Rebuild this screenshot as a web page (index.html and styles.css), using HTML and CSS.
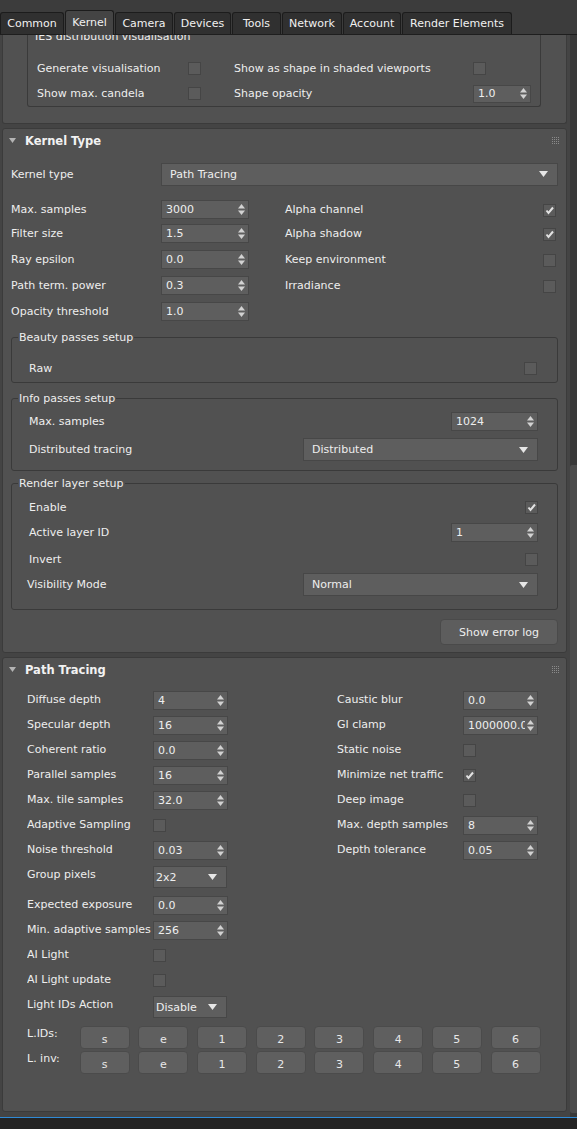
FILE: index.html
```html
<!DOCTYPE html>
<html>
<head>
<meta charset="utf-8">
<title>Render Setup - Kernel</title>
<link rel="stylesheet" href="styles.css">
</head>
<body>
<div class="app">
  <div class="tabbar">
    <div class="tab t-common">Common</div>
    <div class="tab t-kernel active">Kernel</div>
    <div class="tab t-camera">Camera</div>
    <div class="tab t-devices">Devices</div>
    <div class="tab t-tools">Tools</div>
    <div class="tab t-network">Network</div>
    <div class="tab t-account">Account</div>
    <div class="tab t-render">Render Elements</div>
  </div>

  <div class="viewport">
    <div class="rollouts">

      <section class="rollout partial">
        <div class="group ies">
          <span class="legend">IES distribution visualisation</span>
          <div class="ies-grid">
            <span class="lbl">Generate visualisation</span>
            <span class="cb"></span>
            <span class="lbl">Show as shape in shaded viewports</span>
            <span class="cb"></span>
            <span class="lbl">Show max. candela</span>
            <span class="cb"></span>
            <span class="lbl">Shape opacity</span>
            <div class="spin s-ies"><span class="val">1.0</span><svg class="arr" viewBox="0 0 7 11"><polygon points="0,4.5 3.5,0 7,4.5"/><polygon points="0,6.5 3.5,11 7,6.5"/></svg></div>
          </div>
        </div>
      </section>

      <section class="rollout">
        <div class="rhead">
          <svg class="tri" viewBox="0 0 7 5"><polygon points="0,0 7,0 3.5,5"/></svg>
          <span class="title">Kernel Type</span>
          <svg class="grip" viewBox="0 0 8 8"><g><rect x="0" y="0" width="1" height="1"/><rect x="2" y="0" width="1" height="1"/><rect x="4" y="0" width="1" height="1"/><rect x="6" y="0" width="1" height="1"/><rect x="0" y="2" width="1" height="1"/><rect x="2" y="2" width="1" height="1"/><rect x="4" y="2" width="1" height="1"/><rect x="6" y="2" width="1" height="1"/><rect x="0" y="4" width="1" height="1"/><rect x="2" y="4" width="1" height="1"/><rect x="4" y="4" width="1" height="1"/><rect x="6" y="4" width="1" height="1"/><rect x="0" y="6" width="1" height="1"/><rect x="2" y="6" width="1" height="1"/><rect x="4" y="6" width="1" height="1"/><rect x="6" y="6" width="1" height="1"/></g></svg>
        </div>
        <div class="kbody">
          <div class="krow">
            <span class="lbl">Kernel type</span>
            <div class="dd dd-wide"><span class="val">Path Tracing</span><svg class="darr" viewBox="0 0 9 6"><polygon points="0,0 9,0 4.5,6"/></svg></div>
          </div>

          <div class="kgrid">
            <span class="lbl">Max. samples</span>
            <div class="spin"><span class="val">3000</span><svg class="arr" viewBox="0 0 7 11"><polygon points="0,4.5 3.5,0 7,4.5"/><polygon points="0,6.5 3.5,11 7,6.5"/></svg></div>
            <span></span>
            <span class="lbl">Alpha channel</span>
            <span class="cb on"><svg viewBox="0 0 11 11"><path d="M2.5 5.5 L4.5 8 L9 2.5"/></svg></span>

            <span class="lbl">Filter size</span>
            <div class="spin"><span class="val">1.5</span><svg class="arr" viewBox="0 0 7 11"><polygon points="0,4.5 3.5,0 7,4.5"/><polygon points="0,6.5 3.5,11 7,6.5"/></svg></div>
            <span></span>
            <span class="lbl">Alpha shadow</span>
            <span class="cb on"><svg viewBox="0 0 11 11"><path d="M2.5 5.5 L4.5 8 L9 2.5"/></svg></span>

            <span class="lbl">Ray epsilon</span>
            <div class="spin"><span class="val">0.0</span><svg class="arr" viewBox="0 0 7 11"><polygon points="0,4.5 3.5,0 7,4.5"/><polygon points="0,6.5 3.5,11 7,6.5"/></svg></div>
            <span></span>
            <span class="lbl">Keep environment</span>
            <span class="cb"></span>

            <span class="lbl">Path term. power</span>
            <div class="spin"><span class="val">0.3</span><svg class="arr" viewBox="0 0 7 11"><polygon points="0,4.5 3.5,0 7,4.5"/><polygon points="0,6.5 3.5,11 7,6.5"/></svg></div>
            <span></span>
            <span class="lbl">Irradiance</span>
            <span class="cb"></span>

            <span class="lbl">Opacity threshold</span>
            <div class="spin"><span class="val">1.0</span><svg class="arr" viewBox="0 0 7 11"><polygon points="0,4.5 3.5,0 7,4.5"/><polygon points="0,6.5 3.5,11 7,6.5"/></svg></div>
          </div>

          <div class="group g-beauty">
            <span class="legend">Beauty passes setup</span>
            <div class="grow r-cb first">
              <span class="lbl">Raw</span>
              <span class="cb"></span>
            </div>
          </div>

          <div class="group g-info">
            <span class="legend">Info passes setup</span>
            <div class="grow r-spin first">
              <span class="lbl">Max. samples</span>
              <div class="spin s-group"><span class="val">1024</span><svg class="arr" viewBox="0 0 7 11"><polygon points="0,4.5 3.5,0 7,4.5"/><polygon points="0,6.5 3.5,11 7,6.5"/></svg></div>
            </div>
            <div class="grow r-dd">
              <span class="lbl">Distributed tracing</span>
              <div class="dd dd-group"><span class="val">Distributed</span><svg class="darr" viewBox="0 0 9 6"><polygon points="0,0 9,0 4.5,6"/></svg></div>
            </div>
          </div>

          <div class="group g-render">
            <span class="legend">Render layer setup</span>
            <div class="grow r-cb first">
              <span class="lbl">Enable</span>
              <span class="cb on"><svg viewBox="0 0 11 11"><path d="M2.5 5.5 L4.5 8 L9 2.5"/></svg></span>
            </div>
            <div class="grow r-spin">
              <span class="lbl">Active layer ID</span>
              <div class="spin s-group"><span class="val">1</span><svg class="arr" viewBox="0 0 7 11"><polygon points="0,4.5 3.5,0 7,4.5"/><polygon points="0,6.5 3.5,11 7,6.5"/></svg></div>
            </div>
            <div class="grow r-cb r-invert">
              <span class="lbl">Invert</span>
              <span class="cb"></span>
            </div>
            <div class="grow r-dd">
              <span class="lbl shift">Visibility Mode</span>
              <div class="dd dd-group"><span class="val">Normal</span><svg class="darr" viewBox="0 0 9 6"><polygon points="0,0 9,0 4.5,6"/></svg></div>
            </div>
          </div>

          <div class="btnrow">
            <button class="btn">Show error log</button>
          </div>
        </div>
      </section>

      <section class="rollout">
        <div class="rhead">
          <svg class="tri" viewBox="0 0 7 5"><polygon points="0,0 7,0 3.5,5"/></svg>
          <span class="title">Path Tracing</span>
          <svg class="grip" viewBox="0 0 8 8"><g><rect x="0" y="0" width="1" height="1"/><rect x="2" y="0" width="1" height="1"/><rect x="4" y="0" width="1" height="1"/><rect x="6" y="0" width="1" height="1"/><rect x="0" y="2" width="1" height="1"/><rect x="2" y="2" width="1" height="1"/><rect x="4" y="2" width="1" height="1"/><rect x="6" y="2" width="1" height="1"/><rect x="0" y="4" width="1" height="1"/><rect x="2" y="4" width="1" height="1"/><rect x="4" y="4" width="1" height="1"/><rect x="6" y="4" width="1" height="1"/><rect x="0" y="6" width="1" height="1"/><rect x="2" y="6" width="1" height="1"/><rect x="4" y="6" width="1" height="1"/><rect x="6" y="6" width="1" height="1"/></g></svg>
        </div>
        <div class="pbody">
          <div class="pcols">
            <div class="pcol pleft">
              <span class="plbl">Diffuse depth</span>
              <div class="spin s-pt"><span class="val">4</span><svg class="arr" viewBox="0 0 7 11"><polygon points="0,4.5 3.5,0 7,4.5"/><polygon points="0,6.5 3.5,11 7,6.5"/></svg></div>
              <span class="plbl">Specular depth</span>
              <div class="spin s-pt"><span class="val">16</span><svg class="arr" viewBox="0 0 7 11"><polygon points="0,4.5 3.5,0 7,4.5"/><polygon points="0,6.5 3.5,11 7,6.5"/></svg></div>
              <span class="plbl">Coherent ratio</span>
              <div class="spin s-pt"><span class="val">0.0</span><svg class="arr" viewBox="0 0 7 11"><polygon points="0,4.5 3.5,0 7,4.5"/><polygon points="0,6.5 3.5,11 7,6.5"/></svg></div>
              <span class="plbl">Parallel samples</span>
              <div class="spin s-pt"><span class="val">16</span><svg class="arr" viewBox="0 0 7 11"><polygon points="0,4.5 3.5,0 7,4.5"/><polygon points="0,6.5 3.5,11 7,6.5"/></svg></div>
              <span class="plbl">Max. tile samples</span>
              <div class="spin s-pt"><span class="val">32.0</span><svg class="arr" viewBox="0 0 7 11"><polygon points="0,4.5 3.5,0 7,4.5"/><polygon points="0,6.5 3.5,11 7,6.5"/></svg></div>
              <span class="plbl">Adaptive Sampling</span>
              <span class="cb pcb"></span>
              <span class="plbl">Noise threshold</span>
              <div class="spin s-pt"><span class="val">0.03</span><svg class="arr" viewBox="0 0 7 11"><polygon points="0,4.5 3.5,0 7,4.5"/><polygon points="0,6.5 3.5,11 7,6.5"/></svg></div>
              <span class="plbl">Group pixels</span>
              <div class="dd dd-small"><span class="val">2x2</span><svg class="darr" viewBox="0 0 9 6"><polygon points="0,0 9,0 4.5,6"/></svg></div>
              <span class="plbl">Expected exposure</span>
              <div class="spin s-pt"><span class="val">0.0</span><svg class="arr" viewBox="0 0 7 11"><polygon points="0,4.5 3.5,0 7,4.5"/><polygon points="0,6.5 3.5,11 7,6.5"/></svg></div>
              <span class="plbl">Min. adaptive samples</span>
              <div class="spin s-pt"><span class="val">256</span><svg class="arr" viewBox="0 0 7 11"><polygon points="0,4.5 3.5,0 7,4.5"/><polygon points="0,6.5 3.5,11 7,6.5"/></svg></div>
              <span class="plbl">AI Light</span>
              <span class="cb pcb"></span>
              <span class="plbl">AI Light update</span>
              <span class="cb pcb"></span>
              <span class="plbl">Light IDs Action</span>
              <div class="dd dd-small"><span class="val">Disable</span><svg class="darr" viewBox="0 0 9 6"><polygon points="0,0 9,0 4.5,6"/></svg></div>
            </div>

            <div class="pcol pright">
              <span class="plbl">Caustic blur</span>
              <div class="spin s-pt"><span class="val">0.0</span><svg class="arr" viewBox="0 0 7 11"><polygon points="0,4.5 3.5,0 7,4.5"/><polygon points="0,6.5 3.5,11 7,6.5"/></svg></div>
              <span class="plbl">GI clamp</span>
              <div class="spin s-pt"><span class="val">1000000.0</span><svg class="arr" viewBox="0 0 7 11"><polygon points="0,4.5 3.5,0 7,4.5"/><polygon points="0,6.5 3.5,11 7,6.5"/></svg></div>
              <span class="plbl">Static noise</span>
              <span class="cb pcb"></span>
              <span class="plbl">Minimize net traffic</span>
              <span class="cb pcb on"><svg viewBox="0 0 11 11"><path d="M2.5 5.5 L4.5 8 L9 2.5"/></svg></span>
              <span class="plbl">Deep image</span>
              <span class="cb pcb"></span>
              <span class="plbl">Max. depth samples</span>
              <div class="spin s-pt"><span class="val">8</span><svg class="arr" viewBox="0 0 7 11"><polygon points="0,4.5 3.5,0 7,4.5"/><polygon points="0,6.5 3.5,11 7,6.5"/></svg></div>
              <span class="plbl">Depth tolerance</span>
              <div class="spin s-pt"><span class="val">0.05</span><svg class="arr" viewBox="0 0 7 11"><polygon points="0,4.5 3.5,0 7,4.5"/><polygon points="0,6.5 3.5,11 7,6.5"/></svg></div>
            </div>
          </div>

          <div class="lids">
            <span class="lidlbl">L.IDs:</span>
            <button class="lbtn">s</button><button class="lbtn">e</button><button class="lbtn">1</button><button class="lbtn">2</button><button class="lbtn">3</button><button class="lbtn">4</button><button class="lbtn">5</button><button class="lbtn">6</button>
            <span class="lidlbl">L. inv:</span>
            <button class="lbtn">s</button><button class="lbtn">e</button><button class="lbtn">1</button><button class="lbtn">2</button><button class="lbtn">3</button><button class="lbtn">4</button><button class="lbtn">5</button><button class="lbtn">6</button>
          </div>
        </div>
      </section>
    </div>

    <div class="scrollbar"><div class="thumb"></div></div>
  </div>

  <div class="statusline"></div>
</div>
</body>
</html>
```

FILE: styles.css
```css
* { box-sizing: border-box; }
html, body { margin: 0; padding: 0; }
body {
  width: 577px;
  height: 1129px;
  overflow: hidden;
  background: #444444;
  font-family: "DejaVu Sans", "Liberation Sans", sans-serif;
  font-size: 11px;
  color: #eeeeee;
}
.app { display: flex; flex-direction: column; height: 1129px; }

/* Tabs */
.tabbar {
  height: 35px;
  flex: none;
  display: flex;
  align-items: flex-end;
  background: #3c3c3c;
  border-bottom: 1px solid #1e1e1e;
  position: relative;
  z-index: 2;
}
.tab {
  height: 22px;
  margin-right: 1px;
  border: 1px solid #1c1c1c;
  border-bottom: none;
  border-radius: 3px 3px 0 0;
  background: #303030;
  color: #f0f0f0;
  text-align: center;
  line-height: 21px;
  white-space: nowrap;
}
.tab.active {
  height: 25px;
  margin-bottom: -1px;
  background: #444444;
  line-height: 24px;
}
.t-common { width: 64px; }
.t-kernel { width: 49px; }
.t-camera { width: 58px; }
.t-devices { width: 57px; }
.t-tools { width: 49px; }
.t-network { width: 60px; }
.t-account { width: 58px; }
.t-render { width: 110px; }

/* Viewport */
.viewport {
  height: 1082px;
  flex: none;
  display: flex;
  overflow: hidden;
}
.rollouts {
  width: 570px;
  padding: 0 3px 0 2px;
  display: flex;
  flex-direction: column;
  gap: 4px;
}
.scrollbar {
  width: 7px;
  background: #393939;
  display: flex;
  flex-direction: column;
  justify-content: flex-end;
  padding-bottom: 4px;
}
.thumb {
  height: 648px;
  background: #4c4c4c;
  border-radius: 2px 0 0 2px;
}
.statusline {
  flex: 1;
  border-top: 1px solid #2f8ad6;
  background: #242424;
}

/* Rollout */
.rollout {
  flex: none;
  background: #515151;
  border: 1px solid #3b3b3b;
  border-radius: 3px;
}
.rollout.partial {
  height: 89px;
  border-top: none;
  border-radius: 0 0 3px 3px;
  overflow: hidden;
  padding: 0 25px 0 24px;
}
.rhead {
  height: 23px;
  display: flex;
  align-items: center;
  padding: 0 6px 0 6px;
}
.tri { width: 7px; height: 5px; fill: #b4b4b4; margin-right: 9px; }
.title { flex: 1; font-weight: bold; color: #f2f2f2; font-size: 11.5px; }
.grip { width: 8px; height: 8px; fill: #8a8a8a; }

.lbl { white-space: nowrap; }
.lbl.shift { margin-left: -2px; }

/* Group boxes */
.group {
  border: 1px solid #3a3a3a;
  border-radius: 3px;
}
.legend {
  display: block;
  width: fit-content;
  height: 13px;
  margin: -7px 0 0 6px;
  padding: 0 1px;
  line-height: 13px;
  background: #515151;
  white-space: nowrap;
}
.grow {
  display: flex;
  align-items: center;
  justify-content: space-between;
  padding: 0 19px 0 17px;
}
.r-cb { height: 13px; }
.r-spin { height: 19px; }
.r-dd { height: 23px; }

/* IES partial group (scrolled: top edge hidden) */
.group.ies {
  height: 76px;
  border-top: none;
  border-radius: 0 0 3px 3px;
}
.group.ies .legend { margin-top: -4px; height: 12px; line-height: 12px; overflow: hidden; }
.ies-grid {
  display: grid;
  grid-template-columns: 151px 13px 33px 1fr 58px;
  grid-template-rows: 25px 25px;
  align-items: center;
  padding: 0 9px 0 9px;
  margin-top: 13px;
}
.ies-grid .lbl:nth-of-type(3), .ies-grid .lbl:nth-of-type(7) { grid-column: 4; }

/* Kernel body */
.kbody { padding: 10px 8px 7px 8px; }
.krow {
  display: grid;
  grid-template-columns: 150px 1fr;
  align-items: center;
  height: 24px;
}
.kgrid {
  display: grid;
  grid-template-columns: 150px 88px 36px 1fr 13px;
  grid-template-rows: 24px 26px 26px 26px 19px;
  align-items: start;
  margin: 14px 2px 0 0;
}
.kgrid .lbl { line-height: 19px; }
.kgrid .cb { margin-top: 4px; }

.g-beauty { margin-top: 16px; padding-bottom: 7px; }
.g-beauty .first { margin-top: 18px; }
.g-info { margin-top: 15px; padding-bottom: 9px; }
.g-info .first { margin-top: 7px; }
.g-info .r-dd { margin-top: 7px; }
.g-render { margin-top: 12px; padding-bottom: 13px; }
.g-render .first { margin-top: 11px; }
.g-render .r-spin { margin-top: 9px; }
.g-render .r-invert { margin-top: 11px; }
.g-render .r-dd { margin-top: 7px; }
.g-beauty .grow { padding-right: 20px; }

.btnrow { display: flex; justify-content: flex-end; margin-top: 9px; }
.btn {
  width: 118px;
  height: 26px;
  background: #5d5d5d;
  border: 1px solid #4a4a4a;
  border-radius: 4px;
  color: #eeeeee;
  font: inherit;
  padding: 0;
}

/* Controls */
.spin {
  display: flex;
  align-items: center;
  width: 88px;
  height: 19px;
  background: #5e5e5e;
  border: 1px solid #474747;
  padding: 0 3px 0 4px;
}
.spin .val {
  flex: 1;
  overflow: hidden;
  white-space: nowrap;
  line-height: 17px;
}
.arr { width: 7px; height: 11px; fill: #d2d2d2; flex: none; margin-left: 2px; }
.s-ies { width: 58px; height: 18px; }
.s-group { width: 87px; }
.s-pt { width: 75px; padding-left: 4px; }

.dd {
  display: flex;
  align-items: center;
  height: 23px;
  background: #5e5e5e;
  border: 1px solid #474747;
  padding: 0 9px 0 8px;
}
.dd .val { flex: 1; white-space: nowrap; }
.darr { width: 9px; height: 6px; fill: #e6e6e6; }
.dd-group { width: 235px; }
.dd-small { width: 74px; height: 22px; padding: 0 9px 0 2px; }

.cb {
  display: block;
  width: 13px;
  height: 13px;
  background: #5b5b5b;
  border: 1px solid #454545;
}
.cb svg { display: block; width: 11px; height: 11px; fill: none; stroke: #e2e2e2; stroke-width: 2; }

/* Path tracing body */
.pbody { padding: 10px 28px 37px 24px; }
.pcols { display: flex; align-items: flex-start; }
.pcol {
  display: grid;
  grid-template-columns: 126px 75px;
  row-gap: 6px;
  align-items: start;
}
.pleft { grid-template-rows: repeat(7, 19px) 24px repeat(4, 19px) 22px; }
.pright { grid-template-rows: repeat(7, 19px); margin-left: 109px; }
.plbl {
  line-height: 17px;
  white-space: nowrap;
  overflow: hidden;
}
.pcb { margin-top: 3px; }

.lids {
  display: grid;
  grid-template-columns: 44px repeat(8, 50px);
  grid-template-rows: 23px 23px;
  column-gap: 8.7px;
  row-gap: 2px;
  margin-top: 8px;
}
.lidlbl { line-height: 16px; white-space: nowrap; }
.lbtn {
  height: 23px;
  background: #5f5f5f;
  border: 1px solid #4b4b4b;
  border-radius: 4px;
  color: #e8e8e8;
  font: inherit;
  padding: 3px 0 0 0;
}
```
